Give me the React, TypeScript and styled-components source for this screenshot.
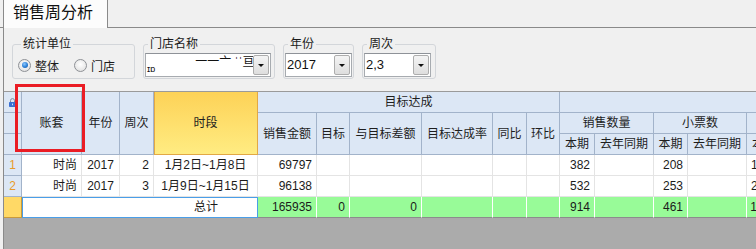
import React from "react";
import styled, { createGlobalStyle, css } from "styled-components";

const GlobalStyle = createGlobalStyle`
  html, body {
    margin: 0;
    padding: 0;
  }
  body {
    background: #f0f0f0;
    font-family: "Liberation Sans", "Noto Sans CJK SC", sans-serif;
    font-size: 12px;
    color: #1b1b1b;
    overflow: hidden;
  }
`;

// column widths incl. right border: row no, 账套, 年份, 周次, 时段, 销售金额 ... third group
const COLS = [18, 60, 38, 34, 104, 59, 33, 72, 71, 34, 33, 35, 59, 34, 59, 35, 59];

interface WeekRow {
  no: string;
  set: string;
  year: string;
  week: string;
  span: string;
  amount: string;
  qty: string;
  tickets: string;
  avg: string;
}

const rows: WeekRow[] = [
  { no: "1", set: "时尚", year: "2017", week: "2", span: "1月2日~1月8日", amount: "69797", qty: "382", tickets: "208", avg: "1480" },
  { no: "2", set: "时尚", year: "2017", week: "3", span: "1月9日~1月15日", amount: "96138", qty: "532", tickets: "253", avg: "2105" },
];

const App: React.FC = () => {
  return (
    <Page>
      <GlobalStyle />
      <TabStrip>
        <Tab>销售周分析</Tab>
      </TabStrip>
      <Panel>
        <FilterBar>
          <GroupBox $width={123} $padLeft={5}>
            <Legend>统计单位</Legend>
            <RadioRow>
              <RadioOption>
                <Radio $checked />
                整体
              </RadioOption>
              <RadioOption>
                <Radio />
                门店
              </RadioOption>
            </RadioRow>
          </GroupBox>
          <GroupBox $width={132}>
            <Legend>门店名称</Legend>
            <Combo $width={126}>
              <ComboText>
                <Smudge $low>ɪɒ</Smudge>
                <Smudge $gap={40}>一一亠 ˈˈ亘-</Smudge>
              </ComboText>
              <ComboButton />
            </Combo>
          </GroupBox>
          <GroupBox $width={71}>
            <Legend>年份</Legend>
            <Combo $width={67}>
              <ComboText>2017</ComboText>
              <ComboButton />
            </Combo>
          </GroupBox>
          <GroupBox $width={74}>
            <Legend>周次</Legend>
            <Combo $width={67}>
              <ComboText>2,3</ComboText>
              <ComboButton />
            </Combo>
          </GroupBox>
        </FilterBar>

        <GridWrap>
          <Grid>
            <RowHead $col={1} $row={1}>
              <svg width="7" height="9" viewBox="0 0 7 9">
                <path d="M1.5 4.2V2.6a2 2 0 0 1 4 0v1.6" stroke="#7d8aa0" strokeWidth="1" fill="none" />
                <rect x="0" y="4" width="7" height="5" rx="0.8" fill="#3a6fd2" />
                <rect x="3" y="5.6" width="1" height="1.6" fill="#cfe0fa" />
              </svg>
            </RowHead>
            <RowHead $col={1} $row={2} />
            <RowHead $col={1} $row={3} />
            <HeadCell $col={2} $row={1} $rs={3}>账套</HeadCell>
            <HeadCell $col={3} $row={1} $rs={3}>年份</HeadCell>
            <HeadCell $col={4} $row={1} $rs={3}>周次</HeadCell>
            <HeadCell $col={5} $row={1} $rs={3} $tone="gold">时段</HeadCell>
            <HeadCell $col={6} $row={1} $cs={6}>目标达成</HeadCell>
            <HeadCell $col={12} $row={1} $cs={6} />

            <HeadCell $col={6} $row={2} $rs={2}>销售金额</HeadCell>
            <HeadCell $col={7} $row={2} $rs={2}>目标</HeadCell>
            <HeadCell $col={8} $row={2} $rs={2}>与目标差额</HeadCell>
            <HeadCell $col={9} $row={2} $rs={2}>目标达成率</HeadCell>
            <HeadCell $col={10} $row={2} $rs={2}>同比</HeadCell>
            <HeadCell $col={11} $row={2} $rs={2}>环比</HeadCell>
            <HeadCell $col={12} $row={2} $cs={2}>销售数量</HeadCell>
            <HeadCell $col={14} $row={2} $cs={2}>小票数</HeadCell>
            <HeadCell $col={16} $row={2} $cs={2}>客单价</HeadCell>

            <HeadCell $col={12} $row={3}>本期</HeadCell>
            <HeadCell $col={13} $row={3}>去年同期</HeadCell>
            <HeadCell $col={14} $row={3}>本期</HeadCell>
            <HeadCell $col={15} $row={3}>去年同期</HeadCell>
            <HeadCell $col={16} $row={3}>本期</HeadCell>
            <HeadCell $col={17} $row={3}>去年同期</HeadCell>

            {rows.map((r) => (
              <React.Fragment key={r.no}>
                <RowNo>{r.no}</RowNo>
                <Cell $align="right">{r.set}</Cell>
                <Cell $align="center">{r.year}</Cell>
                <Cell $align="right">{r.week}</Cell>
                <Cell $align="center">{r.span}</Cell>
                <Cell $align="right">{r.amount}</Cell>
                <Cell />
                <Cell />
                <Cell />
                <Cell />
                <Cell />
                <Cell $align="right">{r.qty}</Cell>
                <Cell />
                <Cell $align="right">{r.tickets}</Cell>
                <Cell />
                <Cell $align="right">{r.avg}</Cell>
                <Cell />
              </React.Fragment>
            ))}

            <TotalNo />
            <TotalLabel>总计</TotalLabel>
            <TotalCell>165935</TotalCell>
            <TotalCell>0</TotalCell>
            <TotalCell>0</TotalCell>
            <TotalCell />
            <TotalCell />
            <TotalCell />
            <TotalCell>914</TotalCell>
            <TotalCell />
            <TotalCell>461</TotalCell>
            <TotalCell />
            <TotalCell>1827</TotalCell>
            <TotalCell />
          </Grid>
        </GridWrap>
      </Panel>
      <RedMark />
    </Page>
  );
};

export default App;

const Page = styled.div`
  position: relative;
  width: 756px;
  height: 249px;
  overflow: hidden;
`;

const TabStrip = styled.div`
  display: flex;
  height: 27px;
  border-bottom: 1px solid #8a8a8a;
`;

const Tab = styled.div`
  box-sizing: border-box;
  margin-left: 3px;
  width: 105px;
  height: 28px;
  padding-left: 9px;
  border: 1px solid #8a8a8a;
  border-top: none;
  border-bottom: none;
  background: #fcfcfc;
  font-size: 16px;
  line-height: 26px;
  color: #111;
  white-space: nowrap;
`;

const Panel = styled.div`
  margin-left: 3px;
  border-left: 1px solid #8a8a8a;
  background: #f0f0f0;
`;

const FilterBar = styled.div`
  display: flex;
  gap: 8px;
  padding: 9px 0 0 8px;
  height: 42px;
  margin-bottom: 12px;
`;

const GroupBox = styled.fieldset<{ $width: number; $padLeft?: number }>`
  box-sizing: border-box;
  width: ${(p) => p.$width}px;
  margin: 0;
  padding: 2px 0 1px ${(p) => p.$padLeft ?? 1}px;
  border: 1px solid #d3d6da;
  border-radius: 3px;
  min-width: 0;
`;

const Legend = styled.legend`
  margin-left: 3px;
  padding: 0 2px;
  font-size: 12px;
  line-height: 14px;
  color: #1b1b1b;
`;

const RadioRow = styled.div`
  display: flex;
  align-items: center;
  height: 24px;
`;

const RadioOption = styled.label`
  display: flex;
  align-items: center;
  gap: 4px;
  margin-right: 15px;
  font-size: 12px;
`;

const Radio = styled.span<{ $checked?: boolean }>`
  position: relative;
  box-sizing: border-box;
  width: 13px;
  height: 13px;
  border-radius: 50%;
  border: 1px solid #8e9196;
  background: radial-gradient(circle at 50% 40%, #ffffff 0%, #e6e6e6 70%, #d2d2d2 100%);
  ${(p) =>
    p.$checked &&
    css`
      &::after {
        content: "";
        position: absolute;
        left: 2.5px;
        top: 2.5px;
        width: 6px;
        height: 6px;
        border-radius: 50%;
        background: radial-gradient(circle at 40% 35%, #8cc8ff 0%, #2a7fd6 55%, #1a4f9a 100%);
      }
    `}
`;

const Combo = styled.div<{ $width: number }>`
  box-sizing: border-box;
  display: flex;
  align-items: center;
  width: ${(p) => p.$width}px;
  height: 24px;
  border: 1px solid #a7abb0;
  border-top-color: #8e9298;
  background: #fff;
`;

const ComboText = styled.div`
  flex: 1;
  min-width: 0;
  padding-left: 1px;
  font-size: 13px;
  line-height: 22px;
  white-space: nowrap;
  overflow: hidden;
  color: #111;
`;

const Smudge = styled.span<{ $gap?: number; $low?: boolean }>`
  display: inline-block;
  margin-left: ${(p) => p.$gap ?? 0}px;
  font-size: ${(p) => (p.$low ? 9 : 12)}px;
  vertical-align: ${(p) => (p.$low ? "-4px" : "2px")};
`;

const ComboButton = styled.div`
  position: relative;
  box-sizing: border-box;
  width: 16px;
  height: 20px;
  margin-right: 1px;
  border: 1px solid #adadad;
  border-radius: 2px;
  background: linear-gradient(#f4f4f4, #dedede);
  &::after {
    content: "";
    position: absolute;
    left: 4px;
    top: 8px;
    border-left: 3px solid transparent;
    border-right: 3px solid transparent;
    border-top: 3px solid #111;
  }
`;

const GridWrap = styled.div`
  height: 157px;
  border-top: 1px solid #9a9a9a;
  background: #ababab;
  overflow: hidden;
`;

const Grid = styled.div`
  display: grid;
  grid-template-columns: ${COLS.map((w) => `${w}px`).join(" ")};
  grid-auto-rows: 21px;
  width: max-content;
`;

const cellBase = css`
  box-sizing: border-box;
  line-height: 20px;
  white-space: nowrap;
  overflow: hidden;
`;

const HeadCell = styled.div<{ $col: number; $row: number; $cs?: number; $rs?: number; $tone?: "blue" | "gold" }>`
  ${cellBase}
  grid-column: ${(p) => p.$col} / span ${(p) => p.$cs ?? 1};
  grid-row: ${(p) => p.$row} / span ${(p) => p.$rs ?? 1};
  display: flex;
  align-items: center;
  justify-content: center;
  color: #1e1e1e;
  ${(p) =>
    p.$tone === "gold"
      ? css`
          background: linear-gradient(#fdd257, #ffec82);
          border-right: 1px solid #e2a845;
          border-bottom: 1px solid #e2a845;
          box-shadow: inset 1px 0 0 #e2a845;
        `
      : css`
          background: #dce7f5;
          border-right: 1px solid #a2b3ca;
          border-bottom: 1px solid #a2b3ca;
        `}
`;

const RowHead = styled(HeadCell)``;

const Cell = styled.div<{ $align?: "left" | "center" | "right" }>`
  ${cellBase}
  padding: 0 4px;
  text-align: ${(p) => p.$align ?? "left"};
  background: #fff;
  border-right: 1px solid #e4e4e4;
  border-bottom: 1px solid #e4e4e4;
  color: #1b1b1b;
`;

const RowNo = styled.div`
  ${cellBase}
  text-align: center;
  background: #dce7f5;
  border-right: 1px solid #a2b3ca;
  border-bottom: 1px solid #a2b3ca;
  color: #e89a2a;
`;

const TotalNo = styled.div`
  ${cellBase}
  background: #ffd966;
  border-right: 1px solid #c99a3c;
  border-bottom: 1px solid #c99a3c;
`;

const TotalLabel = styled.div`
  ${cellBase}
  grid-column: span 4;
  padding-left: 132px;
  text-align: center;
  line-height: 19px;
  background: #fff;
  border: 1px solid #4a9ee8;
  color: #1b1b1b;
`;

const TotalCell = styled.div`
  ${cellBase}
  padding: 0 4px 0 0;
  text-align: right;
  background: #98fb98;
  border-right: 1px solid #ffffff;
  border-bottom: 1px solid #8c8c8c;
  color: #1b1b1b;
`;

const RedMark = styled.div`
  position: absolute;
  left: 15px;
  top: 84px;
  width: 70px;
  height: 68px;
  box-sizing: border-box;
  border: 3px solid #ea1c24;
  pointer-events: none;
`;
